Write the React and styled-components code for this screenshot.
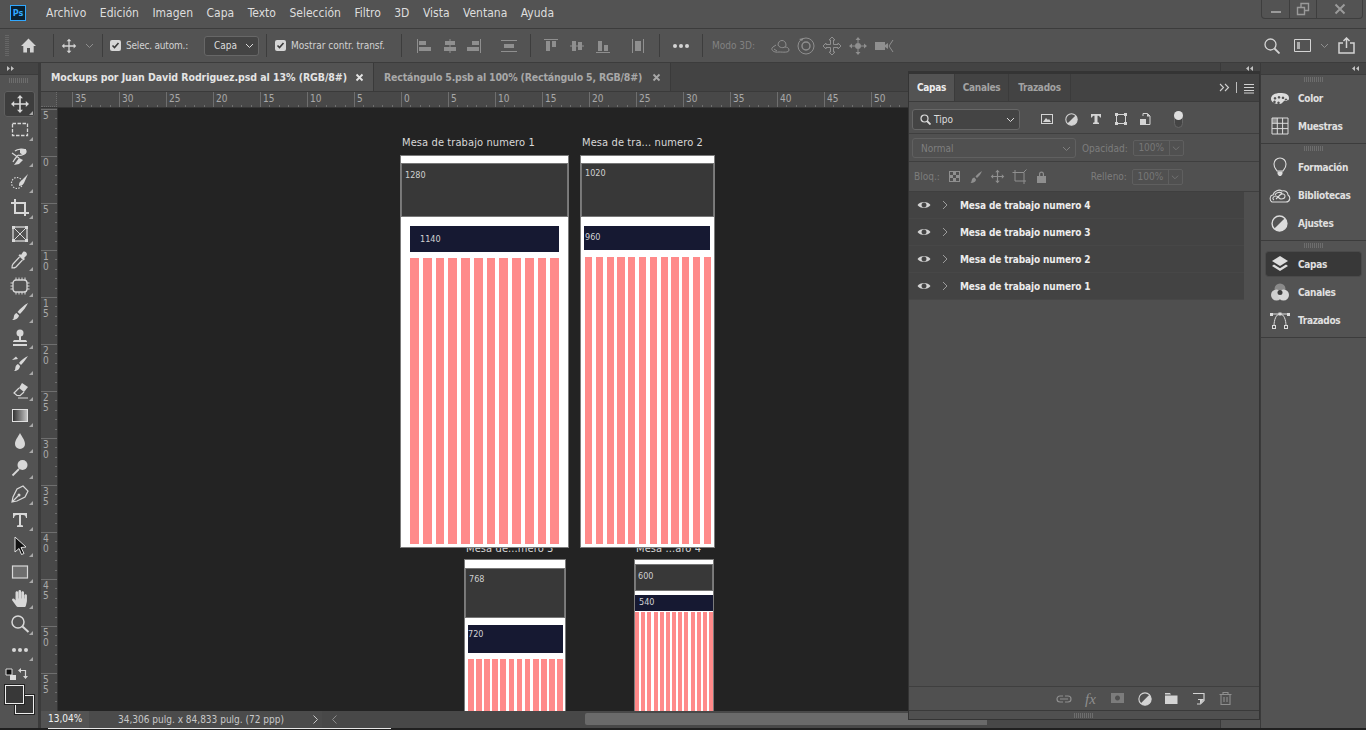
import React from 'react';
import styled, { createGlobalStyle } from 'styled-components';
import { FaHandPaper } from 'react-icons/fa';

const GlobalStyle = createGlobalStyle`
  html, body { margin: 0; padding: 0; background: #535353; }
  body { font-family: "DejaVu Sans", "Noto Sans", sans-serif; font-stretch: condensed; }
  * { box-sizing: border-box; }
`;

const Page = styled.div`
  position: relative;
  width: 1366px;
  height: 730px;
  overflow: hidden;
  display: flex;
  flex-direction: column;
  background: #535353;
  color: #d6d6d6;
`;

const MenuBar = styled.div`
  flex: 0 0 29px;
  display: flex;
  align-items: flex-start;
  border-bottom: 1px solid #3c3c3c;
`;

const PsLogo = styled.div`
  width: 16px;
  height: 16px;
  margin: 5px 20px 0 10px;
  background: #0a2233;
  border: 1px solid #31a8ff;
  color: #31a8ff;
  font-size: 9px;
  font-weight: 700;
  line-height: 14px;
  text-align: center;
`;

const MenuItems = styled.div`
  display: flex;
  gap: 13.5px;
  padding-top: 5px;
`;

const MenuItem = styled.span`
  font-size: 12px;
  line-height: 16px;
  color: #dedede;
`;

const WindowControls = styled.div`
  margin-left: auto;
  margin-right: 3px;
  width: 102px;
  height: 19px;
  display: grid;
  grid-template-columns: 27px 27px 1fr;
  border: 1px solid #3e3e3e;
  border-top: 0;
  border-radius: 0 0 4px 4px;
`;

const WindowButton = styled.div`
  display: flex;
  align-items: center;
  justify-content: center;
  color: #9a9a9a;
  & + & { border-left: 1px solid #3e3e3e; }
`;

const OptionsBar = styled.div`
  flex: 0 0 34px;
  display: flex;
  align-items: center;
  border-bottom: 1px solid #3c3c3c;
`;

const Grip = styled.div`
  flex: 0 0 4px;
  height: 22px;
  margin: 0 11px 0 5px;
  background: repeating-linear-gradient(to bottom, #666 0 1px, transparent 1px 2px);
`;

const Slot = styled.div`
  flex: 0 0 ${p => p.$w}px;
  height: 24px;
  display: flex;
  align-items: center;
  justify-content: center;
  color: ${p => (p.$dim ? '#8f8f8f' : '#d4d4d4')};
`;

const Sep = styled.div`
  flex: 0 0 1px;
  height: 23px;
  background: #3d3d3d;
  margin: 0 ${p => p.$r ?? 7}px 0 ${p => p.$l ?? 7}px;
`;

const Check = styled.span`
  flex: 0 0 11px;
  height: 11px;
  border-radius: 2px;
  background: #d6d6d6;
  display: flex;
  align-items: center;
  justify-content: center;
  color: #3a3a3a;
`;

const OptLabel = styled.span`
  flex: 0 0 ${p => p.$w}px;
  min-width: 0;
  font-size: 10px;
  letter-spacing: ${p => p.$ls ?? 0}px;
  white-space: nowrap;
  margin-left: ${p => p.$l ?? 5}px;
  color: ${p => (p.$dim ? '#828282' : '#d2d2d2')};
`;

const SelectBox = styled.div`
  flex: 0 0 ${p => p.$w}px;
  height: ${p => p.$h ?? 20}px;
  margin-left: ${p => p.$l ?? 0}px;
  display: flex;
  align-items: center;
  gap: 3px;
  padding: 0 4px 0 ${p => p.$pad ?? 9}px;
  background: ${p => (p.$dim ? 'transparent' : '#444444')};
  border: 1px solid ${p => (p.$dim ? '#606060' : '#676767')};
  border-radius: 3px;
  font-size: 10px;
  color: ${p => (p.$dim ? '#7f7f7f' : '#dcdcdc')};
  & > svg:last-child { margin-left: auto; }
`;

const Workspace = styled.div`
  flex: 1;
  min-height: 0;
  display: flex;
`;

const BottomEdge = styled.div`
  flex: 0 0 2px;
  background: #202020;
  padding-left: 48px;
`;

const EdgeStrip = styled.div`
  width: 343px;
  height: 1px;
  background: #e8e8e8;
`;

const Toolbar = styled.aside`
  flex: 0 0 41px;
  display: flex;
  flex-direction: column;
  overflow: hidden;
  border-right: 3px solid #3b3b3b;
`;

const CollapseBar = styled.div`
  flex: 0 0 12px;
  display: flex;
  align-items: center;
  justify-content: ${p => p.$end ? 'flex-end' : 'flex-start'};
  padding: 0 6px;
  background: #444444;
  border-bottom: 1px solid #3c3c3c;
  color: #c2c2c2;
`;

const GripH = styled.div`
  flex: 0 0 auto;
  width: ${p => p.$w ?? 20}px;
  height: 5px;
  margin: ${p => p.$m ?? '3px auto 0'};
  background: repeating-linear-gradient(to right, #6d6d6d 0 1px, transparent 1px 2px);
`;

const ToolList = styled.div`
  display: flex;
  flex-direction: column;
  padding-top: 8px;
`;

const Tool = styled.div`
  position: relative;
  flex: 0 0 26px;
  margin: 0 3px 0 4px;
  display: flex;
  align-items: center;
  justify-content: center;
  color: #d8d8d8;
  border-radius: 3px;
  ${p => p.$active && 'background: #3d3d3d; box-shadow: inset 0 0 0 1px #5f5f5f;'}
  ${p => p.$corner && `&::after {
    content: '';
    position: absolute;
    right: 2px;
    bottom: 2px;
    border-style: solid;
    border-width: 0 0 4px 4px;
    border-color: transparent transparent #a8a8a8 transparent;
  }`}
`;

const SwapRow = styled.div`
  flex: 0 0 21px;
  display: flex;
  align-items: center;
  justify-content: space-between;
  padding: 0 9px 0 5px;
`;

const Swatches = styled.div`
  position: relative;
  flex: 0 0 30px;
  margin: 1px 0 0 5px;
`;

const Swatch = styled.div`
  position: absolute;
  left: ${p => p.$x}px;
  top: ${p => p.$y}px;
  width: 19px;
  height: 19px;
  background: #383838;
  border: 1px solid #eeeeee;
  box-shadow: 0 0 0 1px #222;
`;

const Document = styled.main`
  flex: 0 0 1179px;
  display: flex;
  flex-direction: column;
  min-width: 0;
`;

const TabStrip = styled.div`
  flex: 0 0 29px;
  display: flex;
  background: #434343;
  border-bottom: 1px solid #3a3a3a;
`;

const DocTab = styled.div`
  flex: 0 0 ${p => p.$w}px;
  display: flex;
  align-items: center;
  justify-content: space-between;
  padding: 0 9px 0 10px;
  background: ${p => (p.$active ? '#535353' : '#4a4a4a')};
  border-right: 1px solid #3a3a3a;
  font-size: 10.5px;
  letter-spacing: ${p => p.$ls}px;
  font-weight: 700;
  white-space: nowrap;
  color: ${p => (p.$active ? '#e4e4e4' : '#a8a8a8')};
  overflow: hidden;
`;

const TopRuler = styled.div`
  flex: 0 0 16px;
  display: flex;
  background: #484848;
  border-bottom: 1px solid #343434;
  overflow: hidden;
`;

const RulerCorner = styled.div`
  flex: 0 0 16px;
  border-right: 1px dotted #6c6c6c;
  border-bottom: 1px dotted #6c6c6c;
  background: #4e4e4e;
`;

const TopTicks = styled.div`
  display: flex;
  padding-left: 15px;
`;

const TopTick = styled.div`
  flex: 0 0 47px;
  border-left: 1px solid #6e6e6e;
  padding-left: 2px;
  font-size: 10px;
  line-height: 14px;
  color: #a9a9a9;
  background: repeating-linear-gradient(to right, transparent 0 8.4px, #6e6e6e 8.4px 9.4px) 0 100% / 100% 2px no-repeat;
`;

const CanvasRow = styled.div`
  flex: 1;
  min-height: 0;
  display: flex;
`;

const SideRuler = styled.div`
  flex: 0 0 17px;
  padding-top: 1px;
  background: #484848;
  border-right: 1px solid #343434;
  overflow: hidden;
`;

const SideTick = styled.div`
  height: 47px;
  border-top: 1px solid #6e6e6e;
  padding: 1px 0 0 2px;
  font-size: 10px;
  line-height: 10px;
  color: #a9a9a9;
  background: repeating-linear-gradient(to bottom, transparent 0 8.4px, #6e6e6e 8.4px 9.4px) 100% 0 / 2px 100% no-repeat;
`;

const Digit = styled.div``;

const Canvas = styled.div`
  position: relative;
  flex: 1;
  background: #232323;
  overflow: hidden;
`;

const BoardTitle = styled.div`
  position: absolute;
  left: ${p => p.$x}px;
  top: ${p => p.$y}px;
  font-size: 11px;
  line-height: 14px;
  letter-spacing: 0.1px;
  white-space: nowrap;
  color: #d8d8d8;
`;

const Board = styled.div`
  position: absolute;
  left: ${p => p.$x}px;
  top: ${p => p.$y}px;
  width: ${p => p.$w}px;
  height: ${p => p.$h}px;
  display: flex;
  flex-direction: column;
  background: #ffffff;
  border: 1px solid #7b7b7b;
`;

const BoardHeader = styled.div`
  flex: 0 0 ${p => p.$h}px;
  margin-top: ${p => p.$top}px;
  padding: ${p => p.$pad};
  background: #383838;
  border: 1px solid #767676;
  font-size: 9px;
  line-height: 10px;
  color: #cfcfcf;
`;

const BoardNav = styled.div`
  flex: 0 0 ${p => p.$h}px;
  margin: ${p => p.$top}px ${p => p.$r}px 0 ${p => p.$l}px;
  padding: ${p => p.$pad};
  background: #161932;
  font-size: 9px;
  line-height: 10px;
  color: #d2d2d2;
`;

const BoardGrid = styled.div`
  flex: 1;
  min-height: 0;
  display: flex;
  gap: ${p => p.$gap}px;
  margin: ${p => p.$top}px ${p => p.$r}px ${p => p.$b}px ${p => p.$l}px;
`;

const BoardColumn = styled.div`
  flex: 1;
  background: #ff8a8a;
`;

const StatusBar = styled.div`
  flex: 0 0 17px;
  display: flex;
  align-items: stretch;
  font-size: 10px;
  line-height: 16px;
  background: #484848;
`;

const ZoomValue = styled.div`
  flex: 0 0 48px;
  padding-left: 7px;
  background: #535353;
  color: #f0f0f0;
`;

const DocInfo = styled.div`
  flex: 0 0 233px;
  display: flex;
  align-items: center;
  justify-content: space-between;
  padding: 0 2px 0 29px;
  background: #4b4b4b;
  color: #c8c8c8;
`;

const ScrollLeft = styled.div`
  flex: 0 0 263px;
  display: flex;
  align-items: center;
  padding-left: 8px;
  color: #8c8c8c;
`;

const ScrollThumb = styled.div`
  flex: 0 0 402px;
  height: 12px;
  margin-top: 2px;
  background: #6a6a6a;
  border-radius: 2px 0 0 2px;
`;

const MiddleDock = styled.div`
  flex: 0 0 41px;
  display: flex;
  flex-direction: column;
  border-left: 1px solid #3a3a3a;
  border-right: 1px solid #3a3a3a;
`;

const RightDock = styled.aside`
  flex: 0 0 105px;
  display: flex;
  flex-direction: column;
`;

const DockGroup = styled.div`
  display: flex;
  flex-direction: column;
  padding: 0 0 3px;
  border-bottom: 1px solid #3c3c3c;
`;

const DockItem = styled.div`
  flex: 0 0 ${p => (p.$active ? 24 : 28)}px;
  margin: ${p => (p.$active ? '2px 5px' : '0 5px')};
  display: flex;
  align-items: center;
  font-size: 10px;
  letter-spacing: -0.3px;
  font-weight: 700;
  color: #e0e0e0;
  border-radius: 3px;
  ${p => p.$active && 'background: #383838; box-shadow: 0 0 0 1px #4a4a4a;'}
`;

const DockIcon = styled.div`
  flex: 0 0 27px;
  margin-right: 5px;
  display: flex;
  justify-content: center;
  color: #dcdcdc;
`;

const LayersPanel = styled.section`
  position: absolute;
  left: 908px;
  top: 71px;
  width: 352px;
  height: 649px;
  display: flex;
  flex-direction: column;
  background: #505050;
  border: 1px solid #343434;
  border-top-width: 3px;
`;

const PanelTabs = styled.div`
  flex: 0 0 28px;
  display: flex;
  background: #434343;
  border-bottom: 1px solid #3b3b3b;
`;

const PanelTab = styled.div`
  flex: 0 0 ${p => p.$w}px;
  display: flex;
  align-items: center;
  justify-content: center;
  font-size: 10px;
  letter-spacing: -0.3px;
  font-weight: 700;
  color: ${p => (p.$active ? '#ececec' : '#a2a2a2')};
  background: ${p => (p.$active ? '#535353' : 'transparent')};
  border-right: 1px solid #3b3b3b;
`;

const PanelMenu = styled.div`
  margin-left: auto;
  display: flex;
  align-items: center;
  gap: 6px;
  padding-right: 4px;
  color: #d0d0d0;
`;

const PanelDivider = styled.span`
  width: 1px;
  height: 11px;
  background: #bdbdbd;
`;

const PanelRow = styled.div`
  flex: 0 0 ${p => p.$h}px;
  display: flex;
  align-items: center;
  padding: ${p => p.$top ?? 0}px 0 0 ${p => p.$pad ?? 3}px;
  border-bottom: 1px solid #3f3f3f;
`;

const FilterIcons = styled.div`
  display: flex;
  align-items: center;
  margin-left: 15px;
`;

const FilterToggle = styled.div`
  position: relative;
  width: 9px;
  height: 17px;
  margin-left: 16px;
  border-radius: 5px;
  background: #444;
  border: 1px solid #666;
  &::before {
    content: '';
    position: absolute;
    top: -1px;
    left: -1px;
    width: 9px;
    height: 9px;
    border-radius: 50%;
    background: #dedede;
  }
`;

const FieldLabel = styled.span`
  flex: 0 0 auto;
  font-size: 10px;
  color: #7d7d7d;
  margin: 0 5px 0 ${p => p.$l ?? 6}px;
  white-space: nowrap;
`;

const NumField = styled.div`
  flex: 0 0 51px;
  height: 16px;
  display: grid;
  grid-template-columns: 35px 1fr;
  border: 1px solid #5f5f5f;
  border-radius: 2px;
  font-size: 10px;
  line-height: 14px;
  color: #777;
  text-align: center;
`;

const NumChevron = styled.div`
  display: flex;
  align-items: center;
  justify-content: center;
  border-left: 1px solid #5f5f5f;
  color: #777;
`;

const LayerBody = styled.div`
  flex: 1;
  min-height: 0;
  display: flex;
  flex-direction: column;
  background: #4f4f4f;
`;

const LayerList = styled.div`
  width: 335px;
`;

const LayerRow = styled.div`
  height: 27px;
  display: flex;
  align-items: center;
  background: #434343;
  border-bottom: 1px solid #474747;
  font-size: 10px;
  letter-spacing: -0.12px;
  font-weight: 700;
  color: #ececec;
`;

const LayerEye = styled.div`
  flex: 0 0 29px;
  display: flex;
  justify-content: center;
  color: #d4d4d4;
`;

const LayerCaret = styled.div`
  flex: 0 0 14px;
  margin-right: 8px;
  display: flex;
  justify-content: center;
  color: #9b9b9b;
`;

const PanelFooter = styled.div`
  flex: 0 0 25px;
  display: flex;
  align-items: center;
  justify-content: flex-end;
  padding-right: 20px;
  border-top: 1px solid #3f3f3f;
  border-bottom: 1px solid #3a3a3a;
`;

const FooterIcon = styled.div`
  flex: 0 0 27px;
  display: flex;
  justify-content: center;
  color: ${p => (p.$dim ? '#8e8e8e' : '#d4d4d4')};
`;

const Glyph = ({ size = 20, box, children, ...rest }) => (
  <svg width={size} height={size} viewBox={box ?? `0 0 ${size} ${size}`} fill="currentColor" {...rest}>
    {children}
  </svg>
);

const Line = ({ d, w = 1.2 }) => <path d={d} fill="none" stroke="currentColor" strokeWidth={w} />;

const Chevron = ({ size = 9 }) => (
  <Glyph size={size} box="0 0 9 9"><Line d="M1 3l3.5 3.5L8 3" w={1} /></Glyph>
);
const MoveGlyph = ({ size = 20 }) => (
  <Glyph size={size} box="0 0 20 20">
    <path d="M10 1l3 3.2h-2.2v5h5V7l3.2 3-3.2 3v-2.2h-5v5H13L10 19l-3-3.2h2.2v-5h-5V13L1 10l3.200-3v2.200h5v-5H7z" />
  </Glyph>
);
const Tick = () => (
  <Glyph size={9} box="0 0 9 9"><Line d="M1.500 4.500l2 2L7.500 2" w={1.6} /></Glyph>
);
const Dots = () => (
  <Glyph size={18} box="0 0 18 8"><circle cx="3" cy="4" r="2" /><circle cx="9" cy="4" r="2" /><circle cx="15" cy="4" r="2" /></Glyph>
);
const HalfCircle = ({ size = 16 }) => (
  <Glyph size={size} box="0 0 16 16">
    <circle cx="8" cy="8" r="7" fill="none" stroke="currentColor" strokeWidth="1.300" />
    <path d="M13 3A7 7 0 0 1 3 13z" />
  </Glyph>
);

const toolIcons = [
  <MoveGlyph />,
  <Glyph box="0 0 20 20"><rect x="2.500" y="3.500" width="15" height="12" fill="none" stroke="currentColor" strokeWidth="1.300" strokeDasharray="3.500 1.500" /></Glyph>,
  <Glyph box="0 0 20 20"><Line d="M5 5c2-2 10-3 11 0 .5 3-5 5-8 4M8 9c-1 2-3 3-5 7M2 7l7 5" /><path d="M10 3h6v4l-3 2-3-2zM9 12l4 2-4 4-5 1z" /></Glyph>,
  <Glyph box="0 0 20 20"><circle cx="7" cy="11" r="5.500" fill="none" stroke="currentColor" strokeWidth="1.200" strokeDasharray="1.400 1.400" /><path d="M18 2L11 9c-2 1-2 3-2 5 2 0 4-1 5-3z" /></Glyph>,
  <Glyph box="0 0 20 20"><Line d="M1 5h14v13M5 1v14h14" w={2} /></Glyph>,
  <Glyph box="0 0 20 20"><rect x="3" y="3" width="14" height="14" fill="none" stroke="currentColor" strokeWidth="1.300" /><Line d="M3 3l14 14M17 3L3 17" w={1} /><path d="M2 2h3v3H2zM15 2h3v3h-3zM2 15h3v3H2zM15 15h3v3h-3z" /></Glyph>,
  <Glyph box="0 0 20 20"><path d="M13 2c2-1.500 5 1.500 3.500 3.500L14 8l1 1-1.500 1.500-5-5L10 4l1 1z" /><Line d="M9.500 7L3 14c-1 1-1 3-1 4 1 0 3 0 4-1l6.500-7" /></Glyph>,
  <Glyph box="0 0 20 20"><rect x="3" y="4" width="14" height="12" rx="3" fill="none" stroke="currentColor" strokeWidth="1.300" /><Line d="M6 1.500v2.500M9 1.500v2.500M12 1.500v2.500M15 1.500v2.500M6 16v2.500M9 16v2.500M12 16v2.500M15 16v2.500M.5 7H3M.5 10H3M.5 13H3M17 7h2.500M17 10h2.500M17 13h2.500" w={1} /></Glyph>,
  <Glyph box="0 0 20 20"><path d="M18 1c-2 4-5 8-8 11l-2.500-2C10 7 14 3 18 1zM6.500 11L9 13.500C8.500 16 6 18 2 18c2-1 1.500-2 2-4 .3-1.500 1.200-2.500 2.500-3z" /></Glyph>,
  <Glyph box="0 0 20 20"><circle cx="10" cy="5" r="3.500" /><path d="M9 8h2v4h4c1 0 2 .500 2 2H3c0-1.500 1-2 2-2h4zM3 16h14v2H3z" /></Glyph>,
  <Glyph box="0 0 20 20"><path d="M18 2c-2 3-4 6-7 9l-2-2c2-3 5-5 9-7zM8 10l2 2c0 3-3 5-6 5 1.500-1 1-2 1.500-4 .3-1.500 1.200-2.500 2.500-3zM2 6l6-1-2-2.500zM2 6l3 3" /></Glyph>,
  <Glyph box="0 0 20 20"><path d="M12 3l6 4-4 5-5-4z" /><Line d="M9 8l-5 5 3 2.500 3 .1 4-3.600M8 18h10" /></Glyph>,
  <Glyph box="0 0 20 20"><defs><linearGradient id="gradientTool"><stop offset="0" stopColor="#2e2e2e" /><stop offset="1" stopColor="#c8c8c8" /></linearGradient></defs><rect x="2.500" y="3.500" width="15" height="12" fill="url(#gradientTool)" stroke="#e0e0e0" strokeWidth="1" /></Glyph>,
  <Glyph box="0 0 20 20"><path d="M10 1c2 4 5 7 5 11a5 5 0 0 1-10 0c0-4 3-7 5-11z" /></Glyph>,
  <Glyph box="0 0 20 20"><circle cx="12.500" cy="7" r="5" /><Line d="M9 11l-6.500 6.500" w={1.800} /></Glyph>,
  <Glyph box="0 0 20 20"><Line d="M13 2l5 5-3 6-8 4-5 1 1-5 4-8zM2 18l6-6" /><circle cx="9" cy="11" r="1.500" /></Glyph>,
  <Glyph box="0 0 20 20"><path d="M3 3h14v5h-1c-.3-2-1-3-3-3h-2v10l2 .5V17H7v-1.500l2-.5V5H7C5 5 4.300 6 4 8H3z" /></Glyph>,
  <Glyph box="0 0 20 20"><path d="M5 1l11 10-5 .5 3 6-2.500 1-2.500-6L5 16z" fill="#111" stroke="#e0e0e0" strokeWidth="1" /></Glyph>,
  <Glyph box="0 0 20 20"><rect x="2.500" y="4" width="15" height="12" fill="#6e6e6e" stroke="#d8d8d8" strokeWidth="1.200" /></Glyph>,
  <FaHandPaper size={17} />,
  <Glyph box="0 0 20 20"><circle cx="8" cy="8" r="6" fill="none" stroke="currentColor" strokeWidth="1.500" /><Line d="M12.500 12.500L18.500 18" w={2} /></Glyph>,
  <Dots />,
];

const alignIcons = [
  [<Glyph size={16} key="a"><path d="M1 1h1v14H1zM3 3h7v4H3zM3 9h12v4H3z" /></Glyph>, 28],
  [<Glyph size={16} key="b"><path d="M7.500 1h1v14h-1zM3 3h10v4H3zM2 9h12v4H2z" /></Glyph>, 24],
  [<Glyph size={16} key="c"><path d="M14 1h1v14h-1zM6 3h7v4H6zM1 9h12v4H1z" /></Glyph>, 24],
];

const distIcons = [
  [<Glyph size={16} key="a"><path d="M1 1h14v1H1zM3 3h4v10H3zM9 3h4v6H9z" /></Glyph>, 26],
  [<Glyph size={16} key="b"><path d="M1 7.500h14v1H1zM3 3h4v10H3zM9 4h4v8H9z" /></Glyph>, 26],
  [<Glyph size={16} key="c"><path d="M1 14h14v1H1zM3 3h4v10H3zM9 7h4v6H9z" /></Glyph>, 26],
];

const modeIcons = [
  <Glyph key="a" box="0 0 20 20"><Line d="M3 11c-3 2 0 6 6 5 4 0 10 1 10-2 0-2-2-3-4-3M8 9c0-6 8-6 8 0 0 3-6 4-8 0zM3 11l3-2M4 13l3 2" w={1} /></Glyph>,
  <Glyph key="b" box="0 0 20 20"><circle cx="10" cy="10" r="8" fill="none" stroke="currentColor" strokeWidth="1" /><circle cx="10" cy="10" r="4" fill="none" stroke="currentColor" strokeWidth="1.400" /><path d="M3 3l5-1-2 3z" /></Glyph>,
  <Glyph key="c" box="0 0 20 20"><Line d="M10 1l3 3h-1.500v4.500H16V7l3 3-3 3v-1.500h-4.500V16H13l-3 3-3-3h1.500v-4.500H4V13l-3-3 3-3v1.500h4.500V4H7z" w={1} /></Glyph>,
  <Glyph key="d" box="0 0 20 20"><path d="M10 1l2.500 3h-5zM10 19l-2.500-3h5zM1 10l3-2.500v5zM19 10l-3 2.500v-5z" /><circle cx="10" cy="10" r="3" /><Line d="M10 4v3M10 13v3M4 10h3M13 10h3" w={1} /></Glyph>,
  <Glyph key="e" box="0 0 20 20"><path d="M1 6h10v8H1zM11 9l3-2v6l-3-2z" /><Line d="M19 4l-4 6 4 6" w={1} /></Glyph>,
];

const dockGroups = [
  [
    ['Color', <Glyph key="i" box="0 0 20 20"><path fillRule="evenodd" d="M1 11c0-4 4-6 9-6s9 1 9 5-3 1-5 3-2 3-5 3c-4 0-8-2-8-5zm8-3a1.300 1.300 0 1 0 .01 0zm4 .5a1.300 1.300 0 1 0 .01 0zm3 2a1.300 1.300 0 1 0 .01 0zM5 9a1.300 1.300 0 1 0 .01 0zm-.5 3.500a1.300 1.300 0 1 0 .01 0zm4 1a1.300 1.300 0 1 0 .01 0z" /></Glyph>],
    ['Muestras', <Glyph key="i" box="0 0 20 20"><path d="M2 2h5v5H2z" opacity=".45" /><Line d="M2 2h16v16H2zM7.300 2v16M12.600 2v16M2 7.300h16M2 12.600h16" w={1} /></Glyph>],
  ],
  [
    ['Formación', <Glyph key="i" box="0 0 20 20"><Line d="M7 14c-1-2-3-3-3-7a6 6 0 0 1 12 0c0 4-2 5-3 7z" w={1.100} /><path d="M7.500 14.500h5V17l-1.500 2H9l-1.500-2z" /></Glyph>],
    ['Bibliotecas', <Glyph key="i" size={22} box="0 0 22 22"><Line d="M3 18c-3-2-2-7 1-7 1-4 6-6 9-4 3-1 6 1 6 4 3 2 2 7-2 7zM5 16c-2-1-1-4 2-4 2 0 3 3 5 3s4-1 4-3-3-3-5-1c-1 1-3 3-4 4M6 11c1-3 5-3 7-2" w={1.100} /></Glyph>],
    ['Ajustes', <HalfCircle key="i" size={17} />],
  ],
  [
    ['Capas', <Glyph key="i" box="0 0 20 20"><path d="M10 2l8 5-8 5-8-5z" /><path d="M4 10.500l6 3.700 6-3.700 2 1.500-8 5-8-5z" /></Glyph>, true],
    ['Canales', <Glyph key="i" box="0 0 20 20"><circle cx="10" cy="7" r="5.500" fill="#8a8a8a" /><circle cx="6.500" cy="13" r="5.500" fill="#cfcfcf" /><circle cx="13.500" cy="13" r="5.500" fill="#d8d8d8" /><circle cx="10" cy="10.500" r="2.500" fill="#3f3f3f" /></Glyph>],
    ['Trazados', <Glyph key="i" size={22} box="0 0 22 22"><Line d="M5 17c0-6 2-12 6-12s6 6 6 12M2 5h18" w={1} /><path d="M1 4h3v3H1zM9.500 3.500h3v3h-3zM18 4h3v3h-3z" /><rect x="3.500" y="16.500" width="3" height="3" fill="none" stroke="currentColor" /><rect x="15.500" y="16.500" width="3" height="3" fill="none" stroke="currentColor" /></Glyph>],
  ],
];

const filterIcons = [
  <Glyph size={14} key="a"><path fillRule="evenodd" d="M1 2h12v10H1zm1 1v8h10V3zM3 10l3-4 2 2 1-1 2 3z" /></Glyph>,
  <HalfCircle size={13} key="b" />,
  <Glyph size={14} key="c"><path d="M2 2h10v3.500h-1C10.800 4.300 10 3.800 8.500 3.800v6.400l1.500.5V12H4v-1.300l1.500-.5V3.800C4 3.800 3.200 4.300 3 5.500H2z" /></Glyph>,
  <Glyph size={14} key="d"><Line d="M2.500 2.500h9v9h-9z" w={1} /><path d="M1 1h3v3H1zM10 1h3v3h-3zM1 10h3v3H1zM10 10h3v3h-3z" /></Glyph>,
  <Glyph size={14} key="e"><Line d="M5 4V1.500h4.500L12 4v8.500H8" w={1} /><path d="M9 1.500V4.500h3M2 7h6v6H2z" /></Glyph>,
];

const lockIcons = [
  [<Glyph size={13} key="a"><path fillRule="evenodd" d="M1 1h11v11H1zM2 2v3h3V2zm3 3v3h3V5zM8 2v3h3V2zM2 8v3h3V8zm6 0v3h3V8z" /></Glyph>, 20],
  [<Glyph size={14} key="b"><path d="M13 1c-1 3-3 5-5 7L6.500 6.500C8 4.500 10.500 2.500 13 1zM5.500 7.500L7 9.500C7 11.500 5 13 1.500 13c1-1 1-2 1.300-3 .3-1.500 1.200-2.200 2.700-2.500z" /></Glyph>, 22],
  [<MoveGlyph size={15} key="c" />, 22],
  [<Glyph size={15} key="d" box="0 0 15 15"><Line d="M3 1v11h11M0.500 3.500H12V15M12 3l2.500-2.500" w={1} /></Glyph>, 22],
  [<Glyph size={13} key="e"><path fillRule="evenodd" d="M2 6h9v7H2zM4 6V4a2.500 2.500 0 0 1 5 0v2H7.800V4a1.300 1.300 0 0 0-2.600 0v2z" /></Glyph>, 22],
];

const footerIcons = [
  [<Glyph size={16} key="a"><Line d="M7 5H4a3 3 0 0 0 0 6h3M9 5h3a3 3 0 0 1 0 6H9M4 8h8" w={1.200} /></Glyph>, true],
  [<span key="b" style={{ fontFamily: '"Liberation Serif", serif', fontStyle: 'italic', fontSize: 15, lineHeight: '16px' }}>fx</span>, true],
  [<Glyph size={15} key="c"><path fillRule="evenodd" d="M1 2h13v10H1zm6.500 2.500a2.500 2.500 0 1 0 .01 0z" opacity=".7" /></Glyph>, true],
  [<HalfCircle size={14} key="d" />, false],
  [<Glyph size={15} key="e"><path d="M1 2h5l1 1.500H1zM1 4.500h12.500V13H1z" /></Glyph>, false],
  [<Glyph size={15} key="f"><Line d="M2 2.500h11v7l-3.500 3.500H6" w={1.200} /><path d="M7 8h6l-4 5V9H7z" /></Glyph>, false],
  [<Glyph size={15} key="g"><Line d="M1.500 3.500h12M5 3.500V1.500h5v2M3 3.500v10h9v-10M6 6v5M9 6v5" w={1.100} /></Glyph>, true],
];

const topLabels = [35, 30, 25, 20, 15, 10, 5, 0, 5, 10, 15, 20, 25, 30, 35, 40, 45, 50, 55, 60, 65, 70, 75, 80, 85];
const sideLabels = [5, 0, 5, 10, 15, 20, 25, 30, 35, 40, 45, 50, 55];
const menuLabels = ['Archivo', 'Edición', 'Imagen', 'Capa', 'Texto', 'Selección', 'Filtro', '3D', 'Vista', 'Ventana', 'Ayuda'];
const layerNames = [4, 3, 2, 1].map(n => `Mesa de trabajo numero ${n}`);

const boards = [
  { id: 3, title: 'Mesa de...mero 3', tx: 408, ty: 434, x: 406, y: 451, w: 102, h: 170, hTop: 8, hH: 50, hPad: '5px 3px', hText: '768', nTop: 7, nH: 28, nL: 3, nR: 2, nPad: '4px 0 0 0', nText: '720', gTop: 6, gL: 3, gR: 2, gB: 0, gap: 2.4, cols: 12 },
  { id: 4, title: 'Mesa ...aro 4', tx: 578, ty: 434, x: 576, y: 451, w: 80, h: 170, hTop: 4, hH: 27, hPad: '6px 2px', hText: '600', nTop: 4, nH: 16, nL: 0, nR: 0, nPad: '2px 4px', nText: '540', gTop: 1, gL: 0, gR: 0, gB: 0, gap: 2.200, cols: 13 },
  { id: 1, title: 'Mesa de trabajo numero 1', tx: 344, ty: 28, x: 342, y: 47, w: 169, h: 393, hTop: 7, hH: 54, hPad: '6px 3px', hText: '1280', nTop: 9, nH: 25, nL: 9, nR: 9, nPad: '8px 10px', nText: '1140', gTop: 6, gL: 9, gR: 9, gB: 3, gap: 4, cols: 12 },
  { id: 2, title: 'Mesa de tra... numero 2', tx: 524, ty: 28, x: 522, y: 47, w: 135, h: 393, hTop: 7, hH: 54, hPad: '4px 3px', hText: '1020', nTop: 9, nH: 24, nL: 3, nR: 4, nPad: '6px 1px', nText: '960', gTop: 7, gL: 4, gR: 3, gB: 3, gap: 3.600, cols: 12 },
];

export default function App() {
  return (
    <Page>
      <GlobalStyle />
      <MenuBar>
        <PsLogo>Ps</PsLogo>
        <MenuItems>
          {menuLabels.map(label => <MenuItem key={label}>{label}</MenuItem>)}
        </MenuItems>
        <WindowControls>
          <WindowButton><Glyph size={12}><path d="M1 8h10v2H1z" /></Glyph></WindowButton>
          <WindowButton><Glyph size={14}><Line d="M1.500 5.500h7v7h-7zM5 5V1.500h7.500v7H9" w={1.400} /></Glyph></WindowButton>
          <WindowButton><Glyph size={12}><Line d="M1.500 1.500l9 9M10.500 1.500l-9 9" w={2} /></Glyph></WindowButton>
        </WindowControls>
      </MenuBar>

      <OptionsBar>
        <Grip />
        <Slot $w={17}><Glyph size={17}><path d="M8.500 1.500L1 9h2.300v6.500h3.700V11h3v4.500h3.700V9H16z" /></Glyph></Slot>
        <Sep $l={16} $r={7} />
        <Slot $w={16}><MoveGlyph size={16} /></Slot>
        <Slot $w={25} $dim><Chevron /></Slot>
        <Sep $l={0} $r={7} />
        <Check><Tick /></Check>
        <OptLabel $w={62} $ls={-0.2}>Selec. autom.:</OptLabel>
        <SelectBox $w={55} $l={16}>Capa<Chevron /></SelectBox>
        <Sep $l={7} $r={8} />
        <Check><Tick /></Check>
        <OptLabel $w={95}>Mostrar contr. transf.</OptLabel>
        <Sep $l={15} $r={8} />
        {alignIcons.map(([icon, w], i) => <Slot key={i} $w={w} $dim>{icon}</Slot>)}
        <Slot $w={8} />
        <Slot $w={30} $dim><Glyph size={16}><path d="M0 2h16v1H0zM3 6h10v4H3zM0 13h16v1H0z" /></Glyph></Slot>
        <Sep $l={6} $r={7} />
        {distIcons.map(([icon, w], i) => <Slot key={i} $w={w} $dim>{icon}</Slot>)}
        <Slot $w={43} $dim><Glyph size={16}><path d="M2 1h1v14H2zM13 1h1v14h-1zM5 3h6v10H5z" /></Glyph></Slot>
        <Sep $l={0} $r={6} />
        <Slot $w={30}><Dots /></Slot>
        <Sep $l={6} $r={9} />
        <OptLabel $w={43} $l={0} $dim>Modo 3D:</OptLabel>
        <Slot $w={12} />
        {modeIcons.map((icon, i) => <Slot key={i} $w={26} $dim>{icon}</Slot>)}
        <Slot $w={367} />
        <Slot $w={16}><Glyph size={16}><circle cx="6.500" cy="6.500" r="5.500" fill="none" stroke="currentColor" strokeWidth="1.300" /><Line d="M10.500 10.500l5 5" w={1.800} /></Glyph></Slot>
        <Slot $w={14} />
        <Slot $w={17}><Glyph size={17}><Line d="M.5 2.500h16v12H.5z" w={1} /><path d="M3 5h3v7H3z" opacity=".7" /></Glyph></Slot>
        <Slot $w={27} $dim><Chevron /></Slot>
        <Slot $w={16}><Glyph size={17}><Line d="M5 6H1v10h15V6h-4M8.500 11V1.500M5.500 4l3-3 3 3" w={1.500} /></Glyph></Slot>
      </OptionsBar>

      <Workspace>
        <Toolbar>
          <CollapseBar><Glyph size={9}><path d="M1 2l3 2.500L1 7zM5 2l3 2.500L5 7z" /></Glyph></CollapseBar>
          <GripH />
          <ToolList>
            {toolIcons.map((icon, i) => (
              <Tool key={i} $active={i === 0} $corner>{icon}</Tool>
            ))}
          </ToolList>
          <SwapRow>
            <Glyph size={12}><path d="M1 1h6v6H1z" fill="#111" stroke="#ddd" /><path d="M5 7h6v5H5z" fill="#ddd" /></Glyph>
            <Glyph size={11}><Line d="M1 2.500h6.500V8" w={1.200} /><path d="M3 0v5L0 2.500zM5 8h5l-2.500 3z" /></Glyph>
          </SwapRow>
          <Swatches>
            <Swatch $x={10} $y={10} />
            <Swatch $x={0} $y={0} />
          </Swatches>
        </Toolbar>

        <Document>
          <TabStrip>
            <DocTab $active $w={333} $ls={-0.06}>
              Mockups por Juan David Rodriguez.psd al 13% (RGB/8#)
              <Glyph size={9}><Line d="M1.500 1.500l6 6M7.500 1.500l-6 6" w={1.800} /></Glyph>
            </DocTab>
            <DocTab $w={297} $ls={-0.19}>
              Rectángulo 5.psb al 100% (Rectángulo 5, RGB/8#)
              <Glyph size={9}><Line d="M1.500 1.500l6 6M7.500 1.500l-6 6" w={1.800} /></Glyph>
            </DocTab>
          </TabStrip>
          <TopRuler>
            <RulerCorner />
            <TopTicks>
              {topLabels.map((n, i) => <TopTick key={i}>{n}</TopTick>)}
            </TopTicks>
          </TopRuler>
          <CanvasRow>
            <SideRuler>
              {sideLabels.map((n, i) => (
                <SideTick key={i}>
                  {String(n).split('').map((d, j) => <Digit key={j}>{d}</Digit>)}
                </SideTick>
              ))}
            </SideRuler>
            <Canvas>
              {boards.map(b => (
                <React.Fragment key={b.id}>
                  <BoardTitle $x={b.tx} $y={b.ty}>{b.title}</BoardTitle>
                  <Board $x={b.x} $y={b.y} $w={b.w} $h={b.h}>
                    <BoardHeader $top={b.hTop} $h={b.hH} $pad={b.hPad}>{b.hText}</BoardHeader>
                    <BoardNav $top={b.nTop} $h={b.nH} $l={b.nL} $r={b.nR} $pad={b.nPad}>{b.nText}</BoardNav>
                    <BoardGrid $top={b.gTop} $l={b.gL} $r={b.gR} $b={b.gB} $gap={b.gap}>
                      {Array.from({ length: b.cols }, (_, i) => <BoardColumn key={i} />)}
                    </BoardGrid>
                  </Board>
                </React.Fragment>
              ))}
            </Canvas>
          </CanvasRow>
          <StatusBar>
            <ZoomValue>13,04%</ZoomValue>
            <DocInfo>
              34,306 pulg. x 84,833 pulg. (72 ppp)
              <Glyph size={9}><Line d="M2.500 .5l4 4-4 4" w={1} /></Glyph>
            </DocInfo>
            <ScrollLeft><Glyph size={9}><Line d="M6.500 .5l-4 4 4 4" w={1} /></Glyph></ScrollLeft>
            <ScrollThumb />
          </StatusBar>
        </Document>

        <MiddleDock>
          <CollapseBar $end><Glyph size={9}><path d="M4 2L1 4.500 4 7zM8 2L5 4.500 8 7z" /></Glyph></CollapseBar>
        </MiddleDock>

        <RightDock>
          <CollapseBar $end><Glyph size={9}><path d="M4 2L1 4.500 4 7zM8 2L5 4.500 8 7z" /></Glyph></CollapseBar>
          {dockGroups.map((group, i) => (
            <DockGroup key={i}>
              <GripH $m="2px auto 2px" />
              {group.map(([label, icon, active]) => (
                <DockItem key={label} $active={active}>
                  <DockIcon>{icon}</DockIcon>
                  {label}
                </DockItem>
              ))}
            </DockGroup>
          ))}
        </RightDock>
      </Workspace>
      <BottomEdge><EdgeStrip /></BottomEdge>

      <LayersPanel>
        <PanelTabs>
          <PanelTab $active $w={46}>Capas</PanelTab>
          <PanelTab $w={54}>Canales</PanelTab>
          <PanelTab $w={62}>Trazados</PanelTab>
          <PanelMenu>
            <Glyph size={11}><Line d="M1 2l3.500 3.500L1 9M6 2l3.500 3.500L6 9" w={1.100} /></Glyph>
            <PanelDivider />
            <Glyph size={12}><path d="M1 2h10v1H1zM1 5h10v1H1zM1 8h10v1H1zM1 10.500h10v1H1z" /></Glyph>
          </PanelMenu>
        </PanelTabs>
        <PanelRow $h={32} $top={3}>
          <SelectBox $w={108} $h={21} $pad={7}>
            <Glyph size={11}><circle cx="4.500" cy="4.500" r="3.500" fill="none" stroke="currentColor" strokeWidth="1.200" /><Line d="M7 7l3.500 3.500" w={1.800} /></Glyph>
            Tipo
            <Chevron />
          </SelectBox>
          <FilterIcons>
            {filterIcons.map(icon => <Slot key={icon.key} $w={24.5}>{icon}</Slot>)}
            <FilterToggle />
          </FilterIcons>
        </PanelRow>
        <PanelRow $h={28} $top={1}>
          <SelectBox $dim $w={164} $h={20} $pad={8}>Normal<Chevron /></SelectBox>
          <FieldLabel>Opacidad:</FieldLabel>
          <NumField>100%<NumChevron><Chevron size={8} /></NumChevron></NumField>
        </PanelRow>
        <PanelRow $h={30} $pad={5}>
          <FieldLabel $l={0}>Bloq.:</FieldLabel>
          {lockIcons.map(([icon, w], i) => <Slot key={i} $w={w} $dim>{icon}</Slot>)}
          <FieldLabel $l={38}>Relleno:</FieldLabel>
          <NumField>100%<NumChevron><Chevron size={8} /></NumChevron></NumField>
        </PanelRow>
        <LayerBody>
          <LayerList>
            {layerNames.map(name => (
              <LayerRow key={name}>
                <LayerEye>
                  <Glyph size={14}><path fillRule="evenodd" d="M0.500 7C3 3 11 3 13.500 7 11 11 3 11 .5 7zM7 4.500a2.500 2.500 0 1 0 .01 0z" /></Glyph>
                </LayerEye>
                <LayerCaret>
                  <Glyph size={10}><Line d="M3 1l4 4-4 4" w={1} /></Glyph>
                </LayerCaret>
                {name}
              </LayerRow>
            ))}
          </LayerList>
        </LayerBody>
        <PanelFooter>
          {footerIcons.map(([icon, dim]) => <FooterIcon key={icon.key} $dim={dim}>{icon}</FooterIcon>)}
        </PanelFooter>
        <GripH $m="2px auto 1px" />
      </LayersPanel>
    </Page>
  );
}
